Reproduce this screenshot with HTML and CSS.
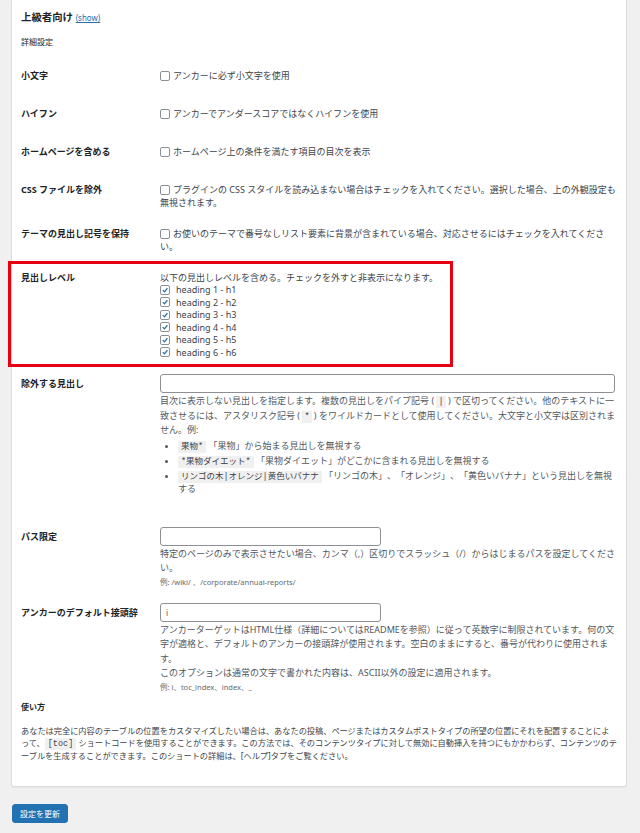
FILE: index.html
```html
<!DOCTYPE html>
<html lang="ja">
<head>
    <meta charset="UTF-8">
    <meta name="viewport" content="width=device-width, initial-scale=1.0">
    <title>上級者向け設定</title>
    <link rel="stylesheet" href="styles.css">
</head>
<body>
    <div class="wrap">
        <div class="panel">
            <h2 class="section-title">上級者向け <a href="#" class="toggle">(show)</a></h2>
            <h3 class="sub-title">詳細設定</h3>

            <div class="form-table">
                <div class="row">
                    <div class="row-label">小文字</div>
                    <div class="row-field">
                        <label class="check"><span class="box"></span>アンカーに必ず小文字を使用</label>
                    </div>
                </div>

                <div class="row">
                    <div class="row-label">ハイフン</div>
                    <div class="row-field">
                        <label class="check"><span class="box"></span>アンカーでアンダースコアではなくハイフンを使用</label>
                    </div>
                </div>

                <div class="row">
                    <div class="row-label">ホームページを含める</div>
                    <div class="row-field">
                        <label class="check"><span class="box"></span>ホームページ上の条件を満たす項目の目次を表示</label>
                    </div>
                </div>

                <div class="row">
                    <div class="row-label">CSS ファイルを除外</div>
                    <div class="row-field">
                        <label class="check"><span class="box"></span>プラグインの CSS スタイルを読み込まない場合はチェックを入れてください。選択した場合、上の外観設定も無視されます。</label>
                    </div>
                </div>

                <div class="row">
                    <div class="row-label">テーマの見出し記号を保持</div>
                    <div class="row-field">
                        <label class="check"><span class="box"></span>お使いのテーマで番号なしリスト要素に背景が含まれている場合、対応させるにはチェックを入れてください。</label>
                    </div>
                </div>

                <div class="row highlight">
                    <div class="row-label">見出しレベル</div>
                    <div class="row-field">
                        <div class="plain">以下の見出しレベルを含める。チェックを外すと非表示になります。</div>
                        <label class="check level"><span class="box on"><svg viewBox="0 0 10 10"><path d="M2.2 5.1 4.3 7.3 8 2.8"/></svg></span>heading 1 - h1</label>
                        <label class="check level"><span class="box on"><svg viewBox="0 0 10 10"><path d="M2.2 5.1 4.3 7.3 8 2.8"/></svg></span>heading 2 - h2</label>
                        <label class="check level"><span class="box on"><svg viewBox="0 0 10 10"><path d="M2.2 5.1 4.3 7.3 8 2.8"/></svg></span>heading 3 - h3</label>
                        <label class="check level"><span class="box on"><svg viewBox="0 0 10 10"><path d="M2.2 5.1 4.3 7.3 8 2.8"/></svg></span>heading 4 - h4</label>
                        <label class="check level"><span class="box on"><svg viewBox="0 0 10 10"><path d="M2.2 5.1 4.3 7.3 8 2.8"/></svg></span>heading 5 - h5</label>
                        <label class="check level"><span class="box on"><svg viewBox="0 0 10 10"><path d="M2.2 5.1 4.3 7.3 8 2.8"/></svg></span>heading 6 - h6</label>
                    </div>
                </div>

                <div class="row">
                    <div class="row-label">除外する見出し</div>
                    <div class="row-field has-input">
                        <input type="text" class="text-input wide">
                        <p class="description">目次に表示しない見出しを指定します。複数の見出しをパイプ記号 ( <code>|</code> ) で区切ってください。他のテキストに一致させるには、アスタリスク記号 ( <code>*</code> ) をワイルドカードとして使用してください。大文字と小文字は区別されません。例:</p>
                        <ul class="examples">
                            <li><code>果物*</code> 「果物」から始まる見出しを無視する</li>
                            <li><code>*果物ダイエット*</code> 「果物ダイエット」がどこかに含まれる見出しを無視する</li>
                            <li><code>リンゴの木|オレンジ|黄色いバナナ</code> 「リンゴの木」、「オレンジ」、「黄色いバナナ」という見出しを無視する</li>
                        </ul>
                    </div>
                </div>

                <div class="row">
                    <div class="row-label">パス限定</div>
                    <div class="row-field has-input">
                        <input type="text" class="text-input">
                        <p class="description">特定のページのみで表示させたい場合、カンマ（,）区切りでスラッシュ（/）からはじまるパスを設定してください。</p>
                        <p class="example">例: /wiki/ 、/corporate/annual-reports/</p>
                    </div>
                </div>

                <div class="row">
                    <div class="row-label">アンカーのデフォルト接頭辞</div>
                    <div class="row-field has-input">
                        <input type="text" class="text-input" value="i">
                        <p class="description">アンカーターゲットはHTML仕様（詳細についてはREADMEを参照）に従って英数字に制限されています。何の文字が適格と、デフォルトのアンカーの接頭辞が使用されます。空白のままにすると、番号が代わりに使用されます。<br>このオプションは通常の文字で書かれた内容は、ASCII以外の設定に適用されます。</p>
                        <p class="example">例: i、toc_index、index、_</p>
                    </div>
                </div>
            </div>

            <h3 class="sub-title usage">使い方</h3>
            <p class="usage-text">あなたは完全に内容のテーブルの位置をカスタマイズしたい場合は、あなたの投稿、ページまたはカスタムポストタイプの所望の位置にそれを配置することによって、<code>[toc]</code> ショートコードを使用することができます。この方法では、そのコンテンツタイプに対して無効に自動挿入を持つにもかかわらず、コンテンツのテーブルを生成することができます。このショートの詳細は、[ヘルプ]タブをご覧ください。</p>
        </div>

        <button type="submit" class="button-primary">設定を更新</button>
    </div>
</body>
</html>
```

FILE: styles.css
```css
body {
    background-color: #f0f0f1;
    font-family: "Noto Sans", "Noto Sans CJK JP", sans-serif;
    color: #3c434a;
    margin: 0;
    padding: 0;
    text-spacing-trim: space-all; /* no squeezing of 」、「 */
}

.wrap {
    padding: 0 13px 0 11px;
}

.panel {
    background-color: #ffffff;
    border: 1px solid #dcdcde;
    border-top: none;
    border-radius: 0 0 3px 3px;
    box-shadow: 0 1px 1px rgba(0, 0, 0, 0.04);
    padding: 10px 9px 24px;
}

.section-title {
    margin: 0;
    font-size: 10.4px;
    line-height: 14px;
    font-weight: bold;
    color: #1d2327;
}

.toggle {
    font-size: 8px;
    font-weight: normal;
    color: #2271b1;
}

.sub-title {
    margin: 11px 0 0;
    font-size: 8px;
    line-height: 12px;
    font-weight: normal;
    color: #1d2327;
}

.form-table {
    margin-top: 10px;
}

.row {
    display: grid;
    grid-template-columns: 139px 1fr;
}

.row-label {
    padding: 11px 0 14px;
    font-size: 9px;
    line-height: 13px;
    font-weight: bold;
    color: #1d2327;
}

.row-field {
    padding: 11px 0 7px;
    font-size: 9px;
    line-height: 13px;
}

.row-field.has-input {
    padding-top: 8px;
}

/* annotation frame drawn over the row */
.highlight {
    position: relative;
}

.highlight::after {
    content: "";
    position: absolute;
    left: -13px;
    top: 1px;
    width: 439px;
    height: 100px;
    border: 3.5px solid #e60012;
    pointer-events: none;
}

.check {
    display: block;
}

.box {
    display: inline-block;
    box-sizing: border-box;
    width: 10px;
    height: 10px;
    margin: -2px 3px 0 0;
    vertical-align: middle;
    border: 1px solid #8c8f94;
    border-radius: 2px;
    background-color: #fff;
}

.box svg {
    display: block;
    width: 8px;
    height: 8px;
    fill: none;
    stroke: #2271b1;
    stroke-width: 1.6;
}

.level {
    line-height: 12.5px;
}

.level .box {
    margin-right: 6px;
}

.text-input {
    display: block;
    box-sizing: border-box;
    width: 221px;
    height: 19px;
    margin: 0;
    padding: 0 5px;
    border: 1px solid #8c8f94;
    border-radius: 3px;
    font-family: inherit;
    font-size: 8px;
    color: #50575e;
}

.text-input.wide {
    width: 455px;
}

.description {
    margin: 1px 0 0;
    line-height: 14.5px;
    color: #50575e;
}

.example {
    margin: 0;
    font-size: 7.5px;
    line-height: 12px;
    color: #646970;
}

code {
    font-family: "Liberation Mono", "Noto Sans CJK JP", monospace;
    font-size: 8.5px;
    line-height: 1;
    background-color: #f0f0f1;
    padding: 1px 3px;
    color: #3c434a;
}

.description code {
    padding: 1px 2px;
}

.examples {
    margin: 1px 0 17px;
    padding-left: 18px;
    color: #50575e;
}

.examples li {
    line-height: 13px;
    margin-bottom: 2px;
}

.usage {
    margin-top: 1px;
    font-weight: bold;
}

.usage-text {
    margin: 12px 0 0;
    font-size: 8.2px;
    line-height: 12.5px;
    color: #3c434a;
}

.button-primary {
    display: block;
    margin-top: 17px;
    margin-left: 1px;
    height: 19px;
    padding: 0 7px;
    background-color: #2271b1;
    border: 1px solid #2271b1;
    border-radius: 3px;
    color: #ffffff;
    font-family: inherit;
    font-size: 8px;
    cursor: pointer;
}
```
